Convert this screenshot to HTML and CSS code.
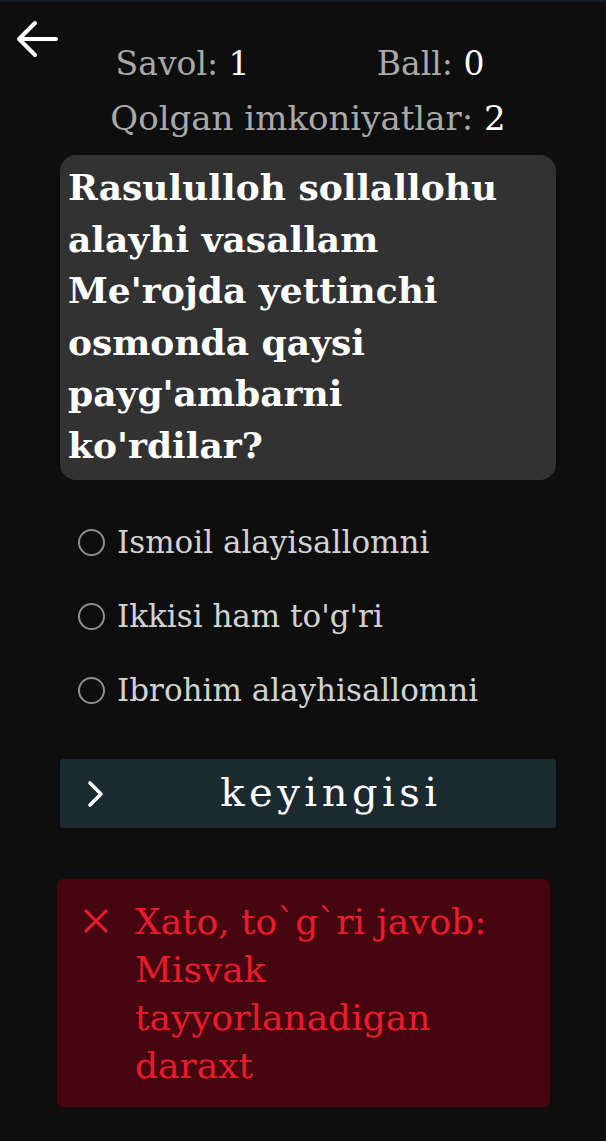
FILE: index.html
```html
<!DOCTYPE html>
<html lang="uz">
<head>
<meta charset="utf-8">
<title>Savol</title>
<link rel="stylesheet" href="styles.css">
</head>
<body>
<div class="screen">
  <header class="header">
    <div class="back-row">
      <button class="back" aria-label="Orqaga">
        <svg width="44" height="38" viewBox="0 0 44 38"><path d="M41 19H4M20 3L4 19l16 16" fill="none" stroke="#fff" stroke-width="4" stroke-linecap="round" stroke-linejoin="round"/></svg>
      </button>
    </div>
    <div class="stats">
      <span class="stat">Savol: <b>1</b></span>
      <span class="stat">Ball: <b>0</b></span>
    </div>
    <div class="attempts">Qolgan imkoniyatlar: <b>2</b></div>
  </header>

  <div class="question">Rasululloh sollallohu alayhi vasallam Me'rojda yettinchi osmonda qaysi payg'ambarni ko'rdilar?</div>

  <ul class="options">
    <li class="option"><span class="radio"></span>Ismoil alayisallomni</li>
    <li class="option"><span class="radio"></span>Ikkisi ham to'g'ri</li>
    <li class="option"><span class="radio"></span>Ibrohim alayhisallomni</li>
  </ul>

  <button class="next">
    <svg class="chev" width="20" height="30" viewBox="0 0 20 30"><path d="M4 4l11 11L4 26" fill="none" stroke="#fff" stroke-width="3.6" stroke-linecap="round" stroke-linejoin="round"/></svg>
    <span class="next-label">keyingisi</span>
  </button>

  <div class="result">
    <svg class="cross" width="26" height="26" viewBox="0 0 26 26"><path d="M2 2l22 22M24 2L2 24" stroke="#ec1a2e" stroke-width="3"/></svg>
    <div class="result-text">Xato, to`g`ri javob: Misvak tayyorlanadigan daraxt</div>
  </div>
</div>
</body>
</html>
```

FILE: styles.css
```css
html, body {
  margin: 0;
  padding: 0;
  background: #0e0e0e;
}
body {
  font-family: "DejaVu Serif", "Liberation Serif", serif;
  color: #fff;
  border-top: 2px solid #161c21;
  border-bottom: 1px solid #050505;
  min-height: 1138px;
}
.screen {
  display: flex;
  flex-direction: column;
}
.header {
  display: flex;
  flex-direction: column;
  padding-top: 18px;
}
.back-row {
  height: 40px;
  padding-left: 15px;
}
.back {
  background: none;
  border: 0;
  padding: 0;
  margin: 0;
  display: block;
}
.stats {
  margin-top: -14px;
  display: flex;
  justify-content: space-around;
  padding: 0 58px 0 52px;
  font-size: 33px;
  line-height: 36px;
  color: #a9a9a9;
}
.stat b, .attempts b {
  font-weight: normal;
  color: #fff;
}
.attempts {
  margin-top: 18px;
  text-align: center;
  font-size: 34px;
  line-height: 36px;
  color: #a9a9a9;
  padding-left: 10px;
}
.question {
  margin: 19px 50px 0 60px;
  background: #323232;
  border-radius: 16px;
  padding: 7px 20px 9px 8px;
  font-weight: bold;
  font-size: 36px;
  line-height: 51.5px;
  color: #fff;
}
.options {
  list-style: none;
  margin: 25px 0 0;
  padding: 0 0 0 78px;
}
.option {
  height: 74px;
  display: flex;
  align-items: center;
  gap: 12px;
  font-size: 31px;
  color: #d2d2d2;
}
.radio {
  width: 23px;
  height: 23px;
  border: 2.6px solid #8e8e8e;
  border-radius: 50%;
  flex: none;
}
.next {
  margin: 32px 50px 0 60px;
  height: 69px;
  background: #1b2a31;
  border: 0;
  border-radius: 4px;
  display: flex;
  align-items: center;
  padding: 0;
  font-family: inherit;
}
.chev {
  margin-left: 26px;
  flex: none;
}
.next-label {
  flex: 1;
  text-align: center;
  color: #fff;
  font-size: 40px;
  letter-spacing: 4.5px;
  padding-bottom: 4px;
}
.result {
  margin: 51px 56px 0 57px;
  background: #46060f;
  border-radius: 6px;
  padding: 19px 20px 17px 26px;
  display: flex;
  align-items: flex-start;
  gap: 26px;
}
.cross {
  flex: none;
  margin-top: 10px;
}
.result-text {
  font-size: 36px;
  line-height: 48px;
  color: #ec1a2e;
}
```
